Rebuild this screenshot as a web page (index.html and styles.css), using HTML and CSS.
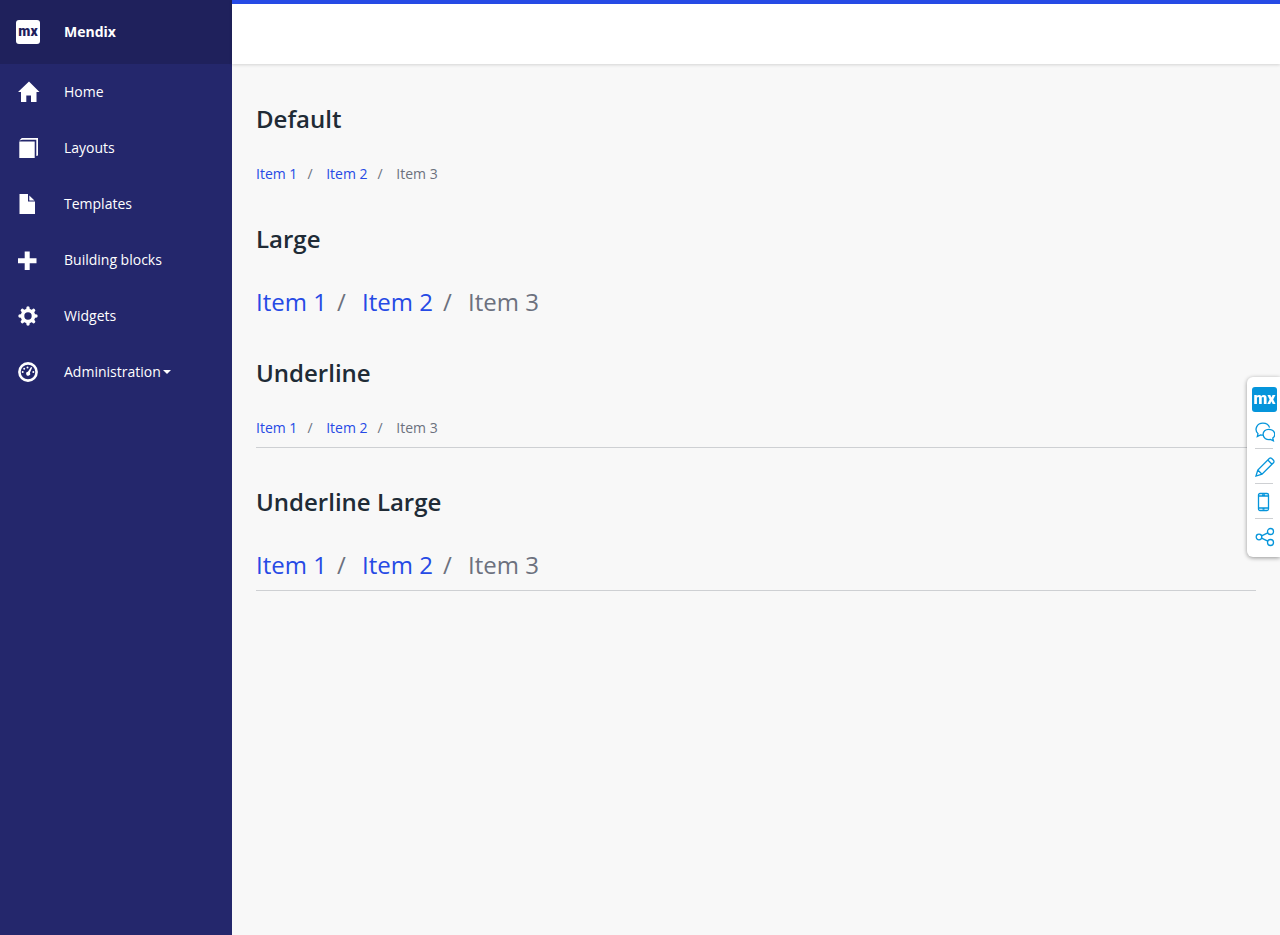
FILE: index.html
```html
<!DOCTYPE html>
<html lang="en">
<head>
<meta charset="utf-8">
<title>Breadcrumbs</title>
<link rel="stylesheet" href="styles.css">
</head>
<body>
<div class="layout">
  <aside class="sidebar">
    <div class="brand"><span class="brand-logo">mx</span><span>Mendix</span></div>
    <nav class="nav">
      <a class="nav-item" href="#"><svg class="nav-icon" viewBox="0 0 24 24"><path d="M13 1.500 2 12h3v10h5.300v-6.500h4.700V22h5.500V12h3z"/></svg>Home</a>
      <a class="nav-item" href="#"><svg class="nav-icon" viewBox="0 0 24 24"><path d="M3.300 5.500H18.700V22H3.300zM3.300 4.500l2.500-2.500H22v17.500l-1.700.5V3.800H6.500z"/></svg>Layouts</a>
      <a class="nav-item" href="#"><svg class="nav-icon" viewBox="0 0 24 24"><path d="M3.500 2H12v7.500h7V22H3.500zM13.300 3.500 18.500 8.500h-5.200z"/></svg>Templates</a>
      <a class="nav-item" href="#"><svg class="nav-icon" viewBox="0 0 24 24"><path d="M8.700 3.500h5v6.800h6.800v5h-6.800V22h-5v-6.700H2v-5h6.700z"/></svg>Building blocks</a>
      <a class="nav-item" href="#"><svg class="nav-icon" viewBox="0 0 24 24"><circle cx="12" cy="12" r="5.500" fill="none" stroke="#fff" stroke-width="3.600"/><path fill="none" stroke="#fff" stroke-width="3.400" stroke-linecap="round" d="M12 4.800V4M12 19.200v.8M4.800 12H4M19.200 12h.8M6.900 6.900l-.5-.5M17.100 17.100l.5.500M6.900 17.100l-.5.500M17.100 6.900l.5-.5"/></svg>Widgets</a>
      <a class="nav-item" href="#"><svg class="nav-icon" viewBox="0 0 24 24"><circle cx="12" cy="12" r="8.600" fill="none" stroke="#fff" stroke-width="2.600"/><circle cx="6.700" cy="12" r="1"/><circle cx="8.200" cy="8.800" r="1"/><circle cx="11.500" cy="7.500" r="1"/><circle cx="17.300" cy="12" r="1"/><path d="m15 7 1.200.6-2.300 5.100a2 2 0 1 1-2-1z"/></svg>Administration<span class="caret"></span></a>
    </nav>
  </aside>
  <div class="main">
    <header class="topbar"></header>
    <main class="content">
      <h2 class="heading">Default</h2>
      <ol class="breadcrumb"><li><a href="#">Item 1</a></li><li><a href="#">Item 2</a></li><li>Item 3</li></ol>
      <h2 class="heading">Large</h2>
      <ol class="breadcrumb breadcrumb-large"><li><a href="#">Item 1</a></li><li><a href="#">Item 2</a></li><li>Item 3</li></ol>
      <h2 class="heading">Underline</h2>
      <ol class="breadcrumb breadcrumb-underline"><li><a href="#">Item 1</a></li><li><a href="#">Item 2</a></li><li>Item 3</li></ol>
      <h2 class="heading">Underline Large</h2>
      <ol class="breadcrumb breadcrumb-large breadcrumb-underline"><li><a href="#">Item 1</a></li><li><a href="#">Item 2</a></li><li>Item 3</li></ol>
    </main>
  </div>
</div>
<div class="toolbar">
  <span class="toolbar-logo">mx</span>
  <button class="tool" aria-label="Feedback"><svg viewBox="0 0 20 20"><path d="M8.200 13.200a9 9 0 0 1-2.700-.3L2.300 14.500l.7-2.900C-1.200 7.500 2 1.200 7.900 1.200c3.300 0 5.800 1.600 6.700 4.400M13.500 7.300c7 0 7.500 6.500 4.300 8.800l.6 2.700-3-1.300c-4.200.7-7.300-1.800-7.300-5.200 0-2.800 2.400-5 5.400-5z"/></svg></button>
  <button class="tool" aria-label="Edit"><svg viewBox="0 0 20 20"><path d="m1 19 1.800-6L14.500 1.300q1-.6 2 0l2.200 2.200q.6 1 0 2L7 17.200zM2.800 13 7 17.200M12.800 3l4.200 4.200"/></svg></button>
  <button class="tool" aria-label="Mobile view"><svg viewBox="0 0 20 20"><rect x="3.500" y="1.500" width="10" height="17" rx="1.500"/><path d="M3.500 4h10M3.500 16h10M7 2.800h3M7.500 17.200h2"/></svg></button>
  <button class="tool" aria-label="Share"><svg viewBox="0 0 20 20"><circle cx="4" cy="10" r="2.800"/><circle cx="15.500" cy="4.500" r="3"/><circle cx="15.500" cy="15.500" r="3"/><path d="m6.600 8.800 6.200-3M6.600 11.200l6.200 3"/></svg></button>
</div>
</body>
</html>
```
FILE: styles.css
```css
* { box-sizing: border-box; }
body {
  margin: 0;
  font-family: "Open Sans", sans-serif;
  font-size: 14px;
  line-height: 20px;
  color: #6c717e;
  background: #f8f8f8;
}
a { color: #264ae5; text-decoration: none; }
.layout { display: flex; min-height: 100vh; }
.sidebar { flex: 0 0 232px; background: #24276c; color: #fff; }
.brand {
  display: flex;
  align-items: center;
  gap: 24px;
  height: 64px;
  padding: 0 16px;
  background: #1f215c;
  font-weight: 700;
}
.brand-logo {
  width: 24px;
  height: 24px;
  border-radius: 3px;
  background: #fff;
  color: #1f215c;
  font: 900 14px/22px Roboto, sans-serif;
  text-align: center;
}
.nav-item {
  display: flex;
  align-items: center;
  height: 56px;
  padding: 0 16px;
  color: #fff;
}
.nav-icon { width: 24px; height: 24px; margin-right: 24px; fill: #fff; }
.caret {
  margin-left: 2px;
  border: 4px solid transparent;
  border-top-color: #fff;
  border-bottom: 0;
}
.main { flex: 1; min-width: 0; }
.topbar {
  height: 64px;
  border-top: 4px solid #264ae5;
  background: #fff;
  box-shadow: 0 1px 3px rgba(0, 0, 0, 0.15);
}
.content { padding: 38px 24px; }
.heading {
  margin: 0 0 28px;
  font-size: 24px;
  line-height: 34px;
  font-weight: 600;
  color: #202b36;
}
.breadcrumb {
  display: flex;
  margin: 0 0 38px;
  padding: 0;
  list-style: none;
}
.breadcrumb li + li::before { content: "/\00a0"; padding: 0 10px; }
.breadcrumb-large { margin-bottom: 36px; font-size: 24px; line-height: 36px; }
.breadcrumb-underline {
  margin-bottom: 37px;
  padding-bottom: 9px;
  border-bottom: 1px solid #ced0d3;
}
.breadcrumb-large.breadcrumb-underline { padding-bottom: 7px; }
.toolbar {
  position: fixed;
  top: 377px;
  right: 0;
  width: 33px;
  padding: 10px 3px 4px 5px;
  border-radius: 6px 0 0 6px;
  background: #fff;
  box-shadow: 0 1px 4px rgba(0, 0, 0, 0.4);
}
.toolbar-logo {
  display: block;
  height: 25px;
  margin-bottom: 1px;
  border-radius: 3px;
  background: #0595db;
  color: #fff;
  font: 900 16px/23px Roboto, sans-serif;
  text-align: center;
}
.tool {
  display: block;
  width: 20px;
  height: 35px;
  margin-left: 3px;
  padding: 0;
  border: 0;
  background: none;
}
.tool + .tool { background: linear-gradient(#ced0d3, #ced0d3) 0 0 / 18px 1px no-repeat; }
.tool svg {
  display: block;
  width: 20px;
  height: 20px;
  margin: 9px 0 6px;
  fill: none;
  stroke: #0595db;
  stroke-width: 1.3;
}
```
